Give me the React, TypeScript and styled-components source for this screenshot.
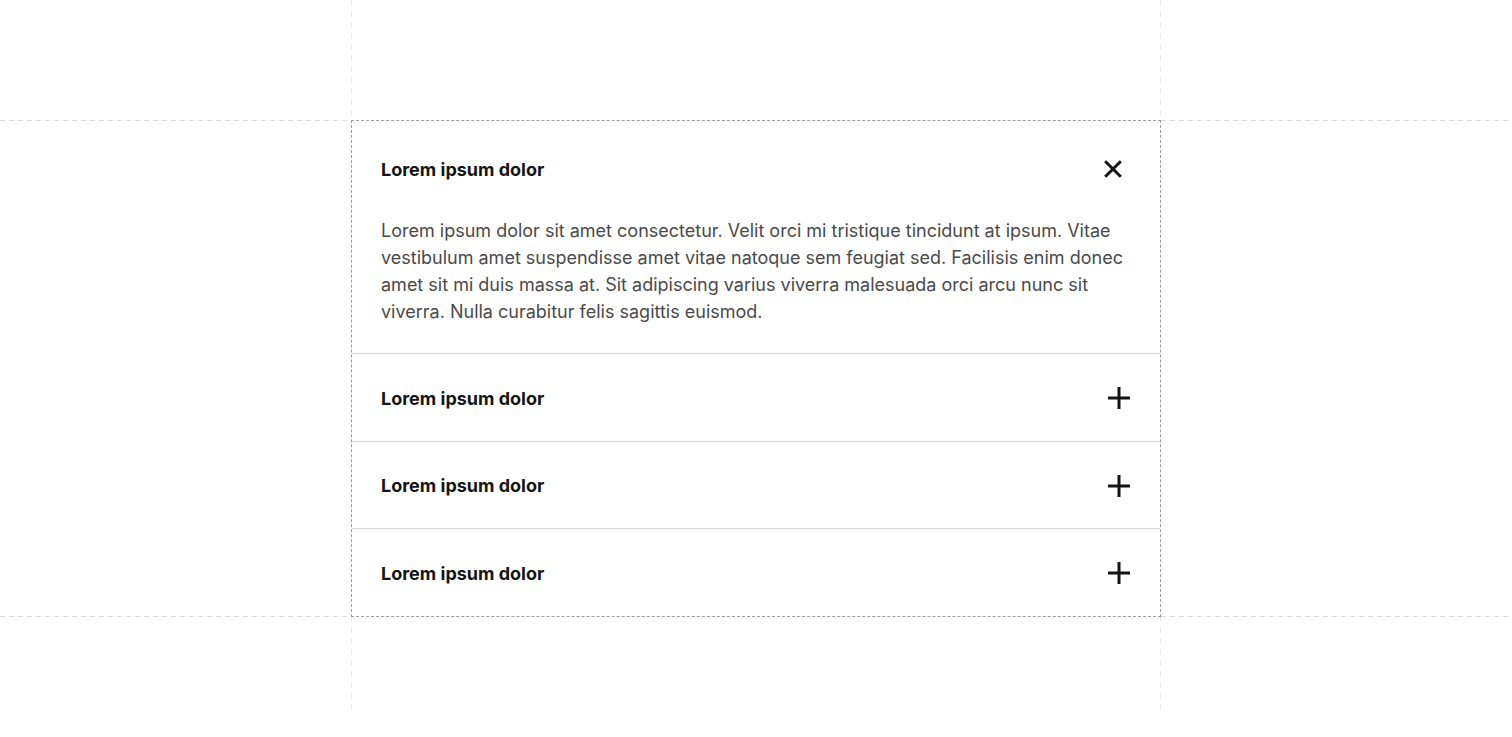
import React, { useState } from "react";
import styled, { createGlobalStyle } from "styled-components";

const GlobalStyle = createGlobalStyle`
  html, body {
    margin: 0;
    padding: 0;
    background: #ffffff;
    font-family: Inter, "Noto Sans", sans-serif;
  }
`;

const Canvas = styled.div`
  display: grid;
  grid-template-columns: 351px 810px 1fr;
  grid-template-rows: 120px auto 98px;
  width: 100%;
  min-height: 714px;
`;

const ColumnGuide = styled.div`
  grid-column: 2;
  grid-row: 1 / 4;
  background-image: repeating-linear-gradient(
      to bottom,
      #ebebeb 0 6px,
      transparent 6px 11px
    ),
    repeating-linear-gradient(to bottom, #ebebeb 0 6px, transparent 6px 11px);
  background-size: 1px 100%, 1px 100%;
  background-position: left top, right top;
  background-repeat: no-repeat;
`;

const RowGuide = styled.div`
  grid-column: 1 / 4;
  grid-row: 2;
  background-image: repeating-linear-gradient(
      to right,
      #dcdcdc 0 5px,
      transparent 5px 9px
    ),
    repeating-linear-gradient(to right, #dcdcdc 0 5px, transparent 5px 9px);
  background-size: 100% 1px, 100% 1px;
  background-position: left top, left bottom;
  background-repeat: no-repeat;
`;

const Accordion = styled.div`
  grid-column: 2;
  grid-row: 2;
  border: 1px dashed #9c9c9c;
  background: #ffffff;
  position: relative;
  z-index: 1;
`;

const Item = styled.div<{ $open: boolean }>`
  padding: ${(p) => (p.$open ? "36px 30px 28px 29px" : "32px 30px 30.67px 29px")};
  & + & {
    border-top: 1px solid #d6d6d6;
  }
`;

const Header = styled.button`
  display: flex;
  align-items: center;
  justify-content: space-between;
  width: 100%;
  height: 24px;
  padding: 0;
  border: 0;
  background: none;
  cursor: pointer;
  font-family: Inter, "Noto Sans", sans-serif;
`;

const Title = styled.span`
  font-size: 18px;
  font-weight: 700;
  color: #141414;
`;

const IconBox = styled.span`
  display: flex;
  flex-shrink: 0;
  align-items: center;
  justify-content: flex-end;
  height: 24px;
`;

const Body = styled.p`
  margin: 36px 0 0;
  font-size: 18px;
  line-height: 27px;
  font-weight: 400;
  color: #4a4a4a;
`;

const CloseIcon = () => (
  <svg
    width="24"
    height="24"
    viewBox="0 0 24 24"
    style={{ marginRight: 5, flexShrink: 0 }}
  >
    <path
      d="M4.2 4.2 L19.8 19.8 M19.8 4.2 L4.2 19.8"
      stroke="#141414"
      strokeWidth="3"
      strokeLinecap="butt"
      fill="none"
    />
  </svg>
);

const PlusIcon = () => (
  <svg
    width="24"
    height="24"
    viewBox="0 0 24 24"
    style={{ marginRight: -1, flexShrink: 0 }}
  >
    <path
      d="M12 1 V23 M1 12 H23"
      stroke="#141414"
      strokeWidth="3"
      fill="none"
    />
  </svg>
);

const text =
  "Lorem ipsum dolor sit amet consectetur. Velit orci mi tristique tincidunt at ipsum. Vitae vestibulum amet suspendisse amet vitae natoque sem feugiat sed. Facilisis enim donec amet sit mi duis massa at. Sit adipiscing varius viverra malesuada orci arcu nunc sit viverra. Nulla curabitur felis sagittis euismod.";

export default function App() {
  const [open, setOpen] = useState(0);
  const items = [0, 1, 2, 3];

  return (
    <>
      <GlobalStyle />
      <Canvas>
        <ColumnGuide />
        <RowGuide />
        <Accordion>
          {items.map((i) => (
            <Item key={i} $open={open === i}>
              <Header onClick={() => setOpen(open === i ? -1 : i)}>
                <Title>Lorem ipsum dolor</Title>
                <IconBox>{open === i ? <CloseIcon /> : <PlusIcon />}</IconBox>
              </Header>
              {open === i && <Body>{text}</Body>}
            </Item>
          ))}
        </Accordion>
      </Canvas>
    </>
  );
}
